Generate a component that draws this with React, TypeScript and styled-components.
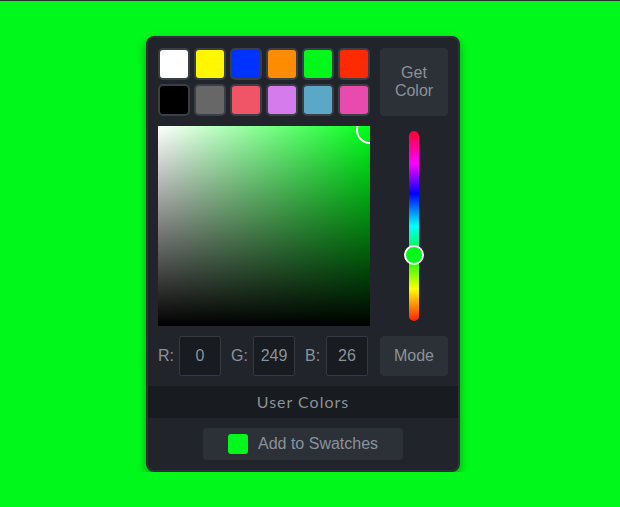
import React from "react";
import styled, { createGlobalStyle } from "styled-components";

const Global = createGlobalStyle`
  html, body { margin: 0; padding: 0; background: #00f91a; }
  body { border-top: 1px solid #2a2d30; font-family: "Liberation Sans", Arial, sans-serif; }
`;

const Page = styled.div`
  display: flex;
  align-items: flex-start;
  padding: 35px 0 0 146px;
`;

const Panel = styled.div`
  width: 310px;
  background: #21242b;
  border: 2px solid #2e3238;
  border-radius: 8px;
  box-shadow: 0 4px 10px rgba(0, 0, 0, 0.35);
  overflow: hidden;
`;

const Body = styled.div`
  padding: 10px;
  display: grid;
  grid-template-columns: 212px 68px;
  column-gap: 10px;
  row-gap: 10px;
`;

const Swatches = styled.div`
  display: grid;
  grid-template-columns: repeat(6, 32px);
  grid-auto-rows: 32px;
  gap: 4px;
`;

const Swatch = styled.div<{ $c: string }>`
  box-sizing: border-box;
  border: 2px solid #3a3f46;
  border-radius: 5px;
  background: ${(p) => p.$c};
`;

const Btn = styled.div<{ $h: number }>`
  height: ${(p) => p.$h}px;
  background: #2c3138;
  border-radius: 4px;
  color: #8a929b;
  font-size: 16px;
  line-height: 18px;
  display: flex;
  align-items: center;
  justify-content: center;
  text-align: center;
`;

const Square = styled.div`
  position: relative;
  height: 200px;
  overflow: hidden;
  background: linear-gradient(to bottom, rgba(0, 0, 0, 0), #000),
    linear-gradient(to right, #fff, hsl(126, 100%, 50%));
`;

const SquareThumb = styled.div`
  position: absolute;
  left: 212px;
  top: 4px;
  width: 28px;
  height: 28px;
  box-sizing: border-box;
  border: 2px solid #fff;
  border-radius: 50%;
  transform: translate(-50%, -50%);
`;

const HueCol = styled.div`
  display: flex;
  justify-content: center;
  padding: 5px 0;
`;

const HueTrack = styled.div`
  position: relative;
  width: 10px;
  height: 190px;
  border-radius: 5px;
  background: linear-gradient(
    to bottom,
    #ff0033 0%,
    #ff00ff 17%,
    #0000ff 33%,
    #00ffff 50%,
    #00ff00 67%,
    #ffff00 83%,
    #ff2200 100%
  );
`;

const HueThumb = styled.div`
  position: absolute;
  left: 50%;
  width: 20px;
  height: 20px;
  box-sizing: border-box;
  border: 2px solid #fff;
  border-radius: 50%;
  background: #00f91a;
  transform: translate(-50%, -50%);
`;

const Controls = styled.div`
  display: flex;
  align-items: center;
  height: 40px;
`;

const Label = styled.span<{ $gap: number; $w: number }>`
  color: #8a929b;
  font-size: 16px;
  margin-left: ${(p) => p.$gap}px;
  width: ${(p) => p.$w}px;
`;

const Field = styled.div`
  box-sizing: border-box;
  width: 42px;
  height: 40px;
  background: #181b1f;
  border: 1px solid #353a40;
  border-radius: 2px;
  color: #8a929b;
  font-size: 16px;
  display: flex;
  align-items: center;
  justify-content: center;
`;

const Header = styled.div`
  box-sizing: border-box;
  height: 32px;
  padding-bottom: 2px;
  background: #181b1f;
  color: #8a929b;
  font-family: Lato, "Open Sans", sans-serif;
  font-size: 16px;
  letter-spacing: 1px;
  display: flex;
  align-items: center;
  justify-content: center;
`;

const Footer = styled.div`
  display: flex;
  justify-content: center;
  padding: 10px 0 10px;
`;

const AddBtn = styled.div`
  width: 200px;
  height: 32px;
  background: #2c3138;
  border-radius: 4px;
  display: flex;
  align-items: center;
  box-sizing: border-box;
  padding: 0 0 1px 25px;
  gap: 10px;
  color: #8a929b;
  font-size: 16px;
`;

const Chip = styled.div`
  width: 20px;
  height: 20px;
  border-radius: 3px;
  background: #00f91a;
`;

const swatches = [
  "#ffffff", "#fff700", "#0033ff", "#ff8c00", "#00f91a", "#ff2a00",
  "#000000", "#676767", "#f05567", "#d57bec", "#5aa7c6", "#e84aad",
];

export default function App() {
  const hue = 126;
  const huePos = (1 - hue / 360) * 190;
  return (
    <>
      <Global />
      <Page>
        <Panel>
          <Body>
            <Swatches>
              {swatches.map((c, i) => (
                <Swatch key={i} $c={c} />
              ))}
            </Swatches>
            <Btn $h={68}>
              Get
              <br />
              Color
            </Btn>
            <Square>
              <SquareThumb />
            </Square>
            <HueCol>
              <HueTrack>
                <HueThumb style={{ top: `${huePos}px` }} />
              </HueTrack>
            </HueCol>
            <Controls>
              <Label $gap={0} $w={21}>R:</Label>
              <Field>0</Field>
              <Label $gap={10} $w={22}>G:</Label>
              <Field>249</Field>
              <Label $gap={10} $w={21}>B:</Label>
              <Field>26</Field>
            </Controls>
            <Btn $h={40}>Mode</Btn>
          </Body>
          <Header>User Colors</Header>
          <Footer>
            <AddBtn>
              <Chip />
              Add to Swatches
            </AddBtn>
          </Footer>
        </Panel>
      </Page>
    </>
  );
}
